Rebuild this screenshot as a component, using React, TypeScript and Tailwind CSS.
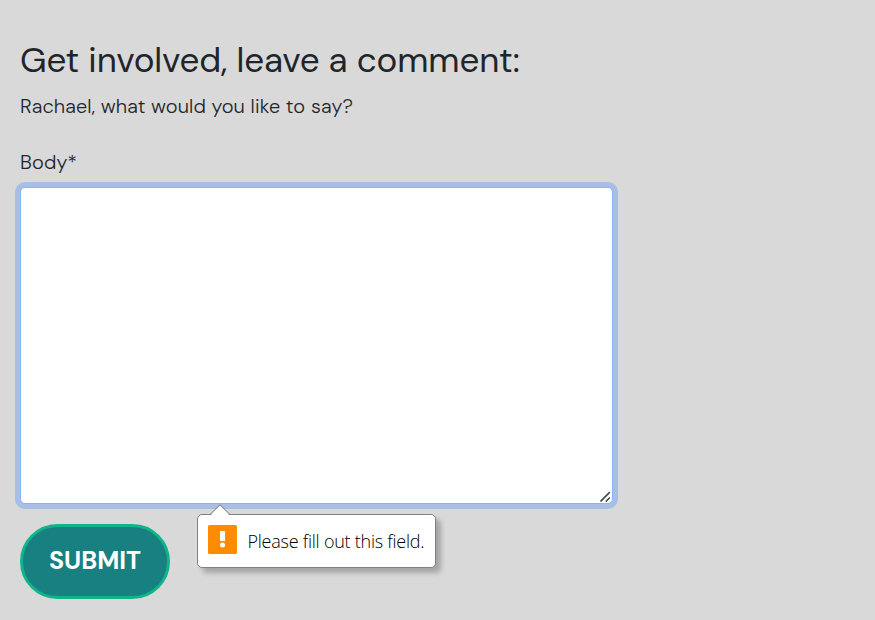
function ResizeGrip() {
  return (
    <svg className="absolute right-0.5 bottom-0.5 h-[11px] w-[11px]" viewBox="0 0 11 11" fill="none" stroke="#4b4b4b" strokeWidth="1.7">
      <path d="M0.5 10.5 9.8 1.2M5.8 10.5 9.8 6.5" />
    </svg>
  );
}

function ValidationBubble() {
  return (
    <div className="absolute top-[-10px] left-[177px] flex h-[54px] w-[239px] items-center rounded-[5px] border border-[#808080] bg-white pl-[10px] shadow-[5px_5px_5px_rgba(0,0,0,0.24)]">
      <svg className="absolute top-[-11px] left-[11px] h-3 w-[22px]" viewBox="0 0 22 12">
        <path d="M1 12 11 1.5 21 12Z" fill="#fff" />
        <path d="M1 10.5 11 .8 21 10.5" fill="none" stroke="#808080" strokeWidth="1" />
      </svg>
      <svg className="mb-[3px] h-[29px] w-[29px] shrink-0" viewBox="0 0 29 29">
        <rect width="29" height="29" rx="1.5" fill="#ff8c00" />
        <rect x="12" y="6" width="5" height="10" fill="#fff" />
        <circle cx="14.5" cy="20" r="2.5" fill="#fff" />
      </svg>
      <span className="ml-[10.5px] font-['Open_Sans','Noto_Sans',sans-serif] text-[18px] leading-6 font-light tracking-[-0.24px] whitespace-nowrap text-black">
        Please fill out this field.
      </span>
    </div>
  );
}

export default function App() {
  return (
    <main className="h-[620px] w-full overflow-hidden bg-[#d9d9d9] px-5 pt-[39px] font-['DM_Sans',Inter,sans-serif] text-[#212529] [font-variation-settings:'opsz'_14]">
      <h2 className="text-[35px] leading-[43px] font-[450] tracking-[-0.12px] whitespace-nowrap">
        Get involved, leave a comment:
      </h2>
      <p className="mt-[9px] text-[20px] leading-[30px] font-light tracking-[0.13px] whitespace-nowrap">
        Rachael, what would you like to say?
      </p>
      <form className="mt-[26px]" noValidate>
        <label htmlFor="body" className="block text-[20px] leading-[30px] font-light tracking-[0.13px]">
          Body*
        </label>
        <div className="relative mt-2.5 h-[317px] w-[593px]">
          <textarea
            id="body"
            className="block h-full w-full resize-none rounded-[5px] border border-[#86b7fe] bg-white shadow-[0_0_0_5px_#a7bfe4] outline-none"
          />
          <ResizeGrip />
        </div>
        <div className="relative mt-5">
          <button
            type="button"
            className="h-[75px] w-[150px] rounded-full border-[3px] border-[#0fb488] bg-[#188080] pb-0.5 text-[25px] leading-[30px] font-bold text-white"
          >
            SUBMIT
          </button>
          <ValidationBubble />
        </div>
      </form>
    </main>
  );
}
